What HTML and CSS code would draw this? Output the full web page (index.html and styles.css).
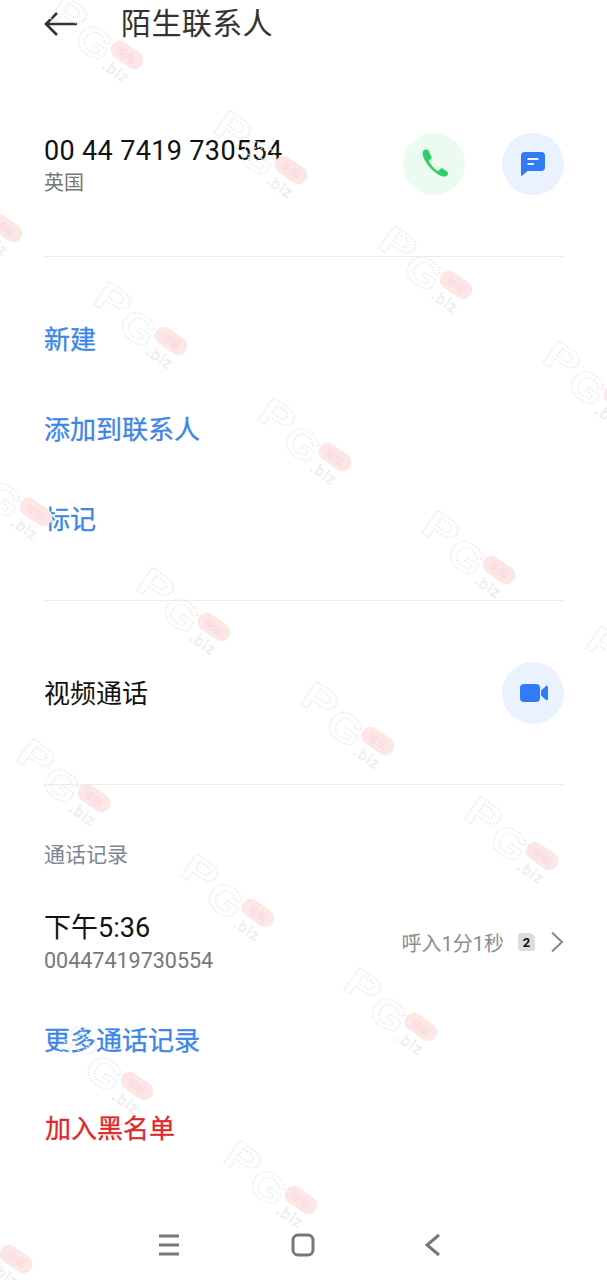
FILE: index.html
```html
<!DOCTYPE html>
<html lang="zh-CN">

<head>
    <meta charset="UTF-8" />
    <title>陌生联系人</title>
    <link rel="stylesheet" href="styles.css">
</head>

<body>
    <div class="page">
        <header class="topBar">
            <svg class="backArrow" width="34" height="26" viewBox="0 0 34 26">
                <path d="M33 13H2M13 2 2 13l11 11" />
            </svg>
            <h1>陌生联系人</h1>
        </header>

        <section class="contact">
            <div>
                <div class="number">00 44 7419 730554</div>
                <div class="region">英国</div>
            </div>
            <div class="actions">
                <span class="circle green">
                    <svg width="33" height="33" viewBox="0 0 30 30">
                        <path d="M6.2 2.6c-1 .5-2 1.4-2 3 .2 3.700 2.400 8.100 6 12.300 3.800 4.200 8.400 7.900 13 8.900 1.900.4 3-.3 3.800-1.600.6-1 .4-2-.5-2.700l-3.800-2.700c-.9-.6-1.800-.5-2.500.2l-1.300 1.300c-.5.400-1 .4-1.600 0-2.800-2-5.200-4.600-7.100-7.700-.3-.6-.3-1.100.2-1.500l1.200-1c.8-.7 1-1.600.5-2.500L9.600 3.400c-.7-1.100-2.100-1.400-3.400-.8Z" />
                    </svg>
                </span>
                <span class="circle blue">
                    <svg width="26" height="26" viewBox="0 0 26 26">
                        <path class="solid" d="M4.500 1h17C23.500 1 25 2.500 25 4.500v12c0 2-1.500 3.500-3.500 3.500H7.500l-5.200 4.600c-.5.400-1.300.1-1.300-.6V4.500C1 2.500 2.500 1 4.500 1Z" />
                        <path class="line" d="M7.500 8h11M7.500 13h6.500" />
                    </svg>
                </span>
            </div>
        </section>

        <section class="links">
            <a class="link">新建</a>
            <a class="link">添加到联系人</a>
            <a class="link">标记</a>
        </section>

        <section class="video">
            <span class="videoLabel">视频通话</span>
            <span class="circle blue">
                <svg class="videoIcon" width="28" height="20" viewBox="0 0 28 20">
                    <rect class="solid" x="0" y="1" width="20" height="18" rx="4" />
                    <path class="solid" d="M21 7.500 26 3c.8-.6 2-.2 2 .9v12.200c0 1.100-1.200 1.500-2 .9l-5-4.500Z" />
                </svg>
            </span>
        </section>

        <section class="history">
            <h2>通话记录</h2>
            <div class="callRow">
                <div>
                    <div class="callTime">下午5:36</div>
                    <div class="callNumber">00447419730554</div>
                </div>
                <div class="callInfo">
                    <span>呼入1分1秒</span>
                    <span class="sim">2</span>
                    <svg width="14" height="22" viewBox="0 0 14 22">
                        <path d="M2 1.500 12 11 2 20.500" />
                    </svg>
                </div>
            </div>
            <a class="link more">更多通话记录</a>
            <a class="link danger">加入黑名单</a>
        </section>

        <nav class="navBar">
            <svg width="24" height="22" viewBox="0 0 24 22">
                <path d="M2 2h20M2 11h20M2 20h20" />
            </svg>
            <svg width="24" height="24" viewBox="0 0 24 24">
                <rect x="2" y="2" width="20" height="20" rx="5" />
            </svg>
            <svg width="16" height="24" viewBox="0 0 16 24">
                <path d="M14 2 2 12l12 10" />
            </svg>
        </nav>

        <!-- forum watermark, stamped over the whole page -->
        <svg class="watermark" width="607" height="1280" viewBox="0 0 607 1280">
            <defs>
                <g id="stamp" transform="rotate(35)">
                    <text class="wmLetters" transform="translate(-88 14) scale(1.300 1)">P</text>
                    <text class="wmLetters" transform="translate(-52 22) scale(1.150 1)">G</text>
                    <text class="wmBiz" x="-14" y="25">.biz</text>
                    <rect class="wmPill" x="-18" y="-9" width="36" height="18" rx="9" />
                    <text class="wmPillText" x="0" y="4">论坛</text>
                </g>
            </defs>
            <use href="#stamp" x="127" y="55" />
            <use href="#stamp" x="291" y="170" />
            <use href="#stamp" x="456" y="285" />
            <use href="#stamp" x="620" y="400" />
            <use href="#stamp" x="6" y="228" />
            <use href="#stamp" x="171" y="341" />
            <use href="#stamp" x="335" y="457" />
            <use href="#stamp" x="499" y="570" />
            <use href="#stamp" x="663" y="685" />
            <use href="#stamp" x="36" y="512" />
            <use href="#stamp" x="214" y="627" />
            <use href="#stamp" x="378" y="741" />
            <use href="#stamp" x="542" y="856" />
            <use href="#stamp" x="94" y="798" />
            <use href="#stamp" x="258" y="913" />
            <use href="#stamp" x="421" y="1027" />
            <use href="#stamp" x="137" y="1086" />
            <use href="#stamp" x="301" y="1200" />
            <use href="#stamp" x="16" y="1259" />
        </svg>
    </div>
</body>

</html>
```

FILE: styles.css
```css
* {
    box-sizing: border-box;
}

body {
    margin: 0;
    background: #fff;
    font-family: Roboto, "Noto Sans CJK SC", sans-serif;
}

.page {
    position: relative;
    width: 607px;
    height: 1280px;
    overflow: hidden;
    padding: 0 43px 0 44px;
}

.topBar {
    display: flex;
    align-items: center;
    height: 48px;
    gap: 43px;
}

.backArrow path {
    fill: none;
    stroke: #333;
    stroke-width: 2.600;
}

.topBar h1 {
    margin: 0;
    font-size: 30px;
    font-weight: 400;
    letter-spacing: 0.400px;
    color: #333;
    line-height: 48px;
}

.contact {
    display: flex;
    justify-content: space-between;
    align-items: center;
    height: 209px;
    padding-top: 23px;
    border-bottom: 1px solid #ececec;
}

.number {
    font-size: 27px;
    line-height: 32px;
    letter-spacing: 0.350px;
    color: #111;
    margin-top: 6px;
}

.region {
    font-size: 20px;
    line-height: 30px;
    color: #777;
    margin-top: 1px;
}

.actions {
    display: flex;
    gap: 37px;
}

.circle {
    display: flex;
    align-items: center;
    justify-content: center;
    width: 62px;
    height: 62px;
    border-radius: 50%;
}

.green {
    background: #ebfbf0;
}

.green path {
    fill: #2fce6b;
}

.blue {
    background: #e9f2fd;
}

.solid {
    fill: #2f7cf6;
}

.line {
    fill: none;
    stroke: #e9f2fd;
    stroke-width: 2;
}

.videoIcon {
    margin-left: 2px;
}

.links {
    display: flex;
    flex-direction: column;
    height: 344px;
    padding-top: 38px;
    border-bottom: 1px solid #ececec;
}

.link {
    display: block;
    height: 90px;
    font-size: 26px;
    line-height: 90px;
    color: #3d85e8;
    -webkit-text-stroke: 0.300px currentColor;
}

.video {
    display: flex;
    justify-content: space-between;
    align-items: center;
    height: 184px;
    border-bottom: 1px solid #ececec;
}

.videoLabel {
    font-size: 26px;
    color: #111;
    margin-top: -2px;
}

.history h2 {
    margin: 0;
    padding-top: 54px;
    font-size: 21px;
    line-height: 32px;
    font-weight: 400;
    color: #7d8595;
}

.callRow {
    display: flex;
    justify-content: space-between;
    align-items: center;
    margin-top: 33px;
    height: 76px;
}

.callTime {
    font-size: 27px;
    line-height: 38px;
    color: #111;
}

.callNumber {
    font-size: 21.500px;
    line-height: 28px;
    color: #777;
}

.callInfo {
    display: flex;
    align-items: center;
    font-size: 20px;
    color: #8c8c8c;
}

.sim {
    display: flex;
    align-items: center;
    justify-content: center;
    width: 17px;
    height: 18px;
    margin: 0 15px 0 14px;
    border-radius: 3px 6px 3px 3px;
    background: #dcdcdc;
    color: #111;
    font-size: 13px;
    font-weight: 700;
}

.callInfo svg path {
    fill: none;
    stroke: #888;
    stroke-width: 2;
}

.more {
    margin-top: 16px;
}

.danger {
    height: 88px;
    line-height: 88px;
    margin-top: -1px;
    padding-left: 1px;
    color: #e0282c;
}

.navBar {
    position: absolute;
    left: 157px;
    top: 1233px;
    width: 284px;
    display: flex;
    align-items: center;
    justify-content: space-between;
}

.navBar svg * {
    fill: none;
    stroke: #777;
    stroke-width: 3;
}

.watermark {
    position: absolute;
    left: 0;
    top: 0;
    pointer-events: none;
}

.wmLetters {
    font-family: "Liberation Sans", sans-serif;
    font-size: 40px;
    font-weight: 700;
    fill: none;
    stroke: #e9ebf1;
    stroke-width: 1.300;
    stroke-dasharray: 1.500 1.500;
}

.wmBiz {
    font-family: "Liberation Sans", sans-serif;
    font-size: 15px;
    letter-spacing: 1.500px;
    fill: none;
    stroke: #e8e8e8;
    stroke-width: 0.600;
}

.wmPill {
    fill: #fde6e6;
}

.wmPillText {
    font-size: 10px;
    fill: #f9d6d6;
    text-anchor: middle;
}
```
